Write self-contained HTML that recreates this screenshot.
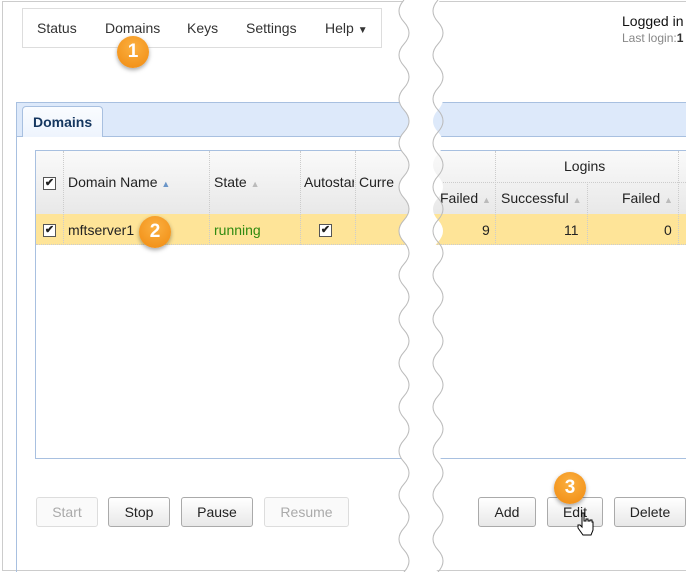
<!DOCTYPE html>
<html><head><meta charset="utf-8"><style>
*{box-sizing:border-box;margin:0;padding:0}
body{width:686px;height:572px;overflow:hidden;background:#fff;font-family:"Liberation Sans",Arial,sans-serif;font-size:14px;color:#222;position:relative}
.a{position:absolute}
.frame{left:2px;top:1px;width:700px;height:570px;border:1px solid #ccc}
.nav{left:22px;top:8px;width:360px;height:40px;border:1px solid #ddd}
.nav span{position:absolute;top:11px;color:#333}
.badge{width:32px;height:32px;border-radius:50%;background:radial-gradient(circle at 50% 35%,#fbb040,#f08a10);color:#fff;font-weight:bold;font-size:19px;text-align:center;line-height:32px;box-shadow:0 2px 4px rgba(0,0,0,.35)}
.band{left:16px;top:102px;width:680px;height:35px;background:#dde9fa;border:1px solid #a8c0e0}
.panelL{left:16px;top:136px;width:1px;height:436px;background:#a8c0e0}
.tab{left:22px;top:106px;width:81px;height:31px;background:linear-gradient(#fafcff,#eef4fd);border:1px solid #a8c0e0;border-bottom:none;border-radius:4px 4px 0 0;font-weight:bold;color:#15365f;font-size:14px;padding:7px 0 0 10px}
.tbl{left:35px;top:150px;width:660px;height:309px;border:1px solid #a8c0e0;background:#fff}
.hdr{left:36px;top:151px;width:660px;height:63px;background:linear-gradient(#fafafa,#e8e8e8)}
.row{left:36px;top:214px;width:660px;height:31px;background:#fee498;border-bottom:1px dotted #ccc}
.vl{position:absolute;width:0;border-left:1px dotted #ccc}
.cb{width:13px;height:13px;border:1px solid #555;background:#fff;font-size:11px;line-height:11px;text-align:center;font-weight:bold}
.btn{top:497px;height:30px;border:1px solid #aaa;border-radius:3px;background:linear-gradient(#fff,#e8e8e8);text-align:center;line-height:28px;color:#222}
.dis{border-color:#ddd;color:#aaa;background:#fafafa}
.sort{color:#bbb;font-size:9px}
</style></head><body>
<div class="a frame"></div>
<div class="a nav">
<span style="left:14px">Status</span><span style="left:82px">Domains</span><span style="left:164px">Keys</span><span style="left:223px">Settings</span><span style="left:302px">Help <span style="position:static;font-size:10px">&#9660;</span></span>
</div>
<div class="a" style="left:622px;top:13px;font-size:14px;color:#111">Logged in</div>
<div class="a" style="left:622px;top:31px;font-size:12px;color:#888">Last login:<b style="color:#333">1</b></div>

<div class="a band"></div>
<div class="a panelL"></div>
<div class="a tab">Domains</div>

<div class="a tbl"></div>
<div class="a hdr"></div>
<div class="a row"></div>
<div class="a" style="left:436px;top:182px;width:260px;border-top:1px dotted #ccc"></div>
<div class="vl" style="left:63px;top:151px;height:94px"></div>
<div class="vl" style="left:209px;top:151px;height:94px"></div>
<div class="vl" style="left:300px;top:151px;height:94px"></div>
<div class="vl" style="left:355px;top:151px;height:94px"></div>
<div class="vl" style="left:495px;top:151px;height:94px"></div>
<div class="vl" style="left:587px;top:182px;height:63px"></div>
<div class="vl" style="left:678px;top:151px;height:94px"></div>

<div class="a cb" style="left:43px;top:177px">&#10004;</div>
<div class="a" style="left:68px;top:174px">Domain Name <span style="color:#6a95c8;font-size:9px">&#9650;</span></div>
<div class="a" style="left:214px;top:174px">State <span class="sort">&#9650;</span></div>
<div class="a" style="left:304px;top:174px;width:50px;overflow:hidden;white-space:nowrap">Autostart</div>
<div class="a" style="left:359px;top:174px">Curre</div>
<div class="a" style="left:564px;top:158px">Logins</div>
<div class="a" style="left:440px;top:190px">Failed <span class="sort">&#9650;</span></div>
<div class="a" style="left:501px;top:190px">Successful <span class="sort">&#9650;</span></div>
<div class="a" style="left:622px;top:190px">Failed <span class="sort">&#9650;</span></div>

<div class="a cb" style="left:43px;top:224px">&#10004;</div>
<div class="a" style="left:68px;top:222px">mftserver1</div>
<div class="a" style="left:214px;top:222px;color:#2f8a10">running</div>
<div class="a cb" style="left:319px;top:224px">&#10004;</div>
<div class="a" style="left:482px;top:222px">9</div>
<div class="a" style="left:564px;top:222px">11</div>
<div class="a" style="left:664px;top:222px">0</div>

<div class="a btn dis" style="left:36px;width:62px">Start</div>
<div class="a btn" style="left:108px;width:62px">Stop</div>
<div class="a btn" style="left:181px;width:72px">Pause</div>
<div class="a btn dis" style="left:264px;width:85px">Resume</div>
<div class="a btn" style="left:478px;width:58px">Add</div>
<div class="a btn" style="left:547px;width:56px">Edit</div>
<svg class="a" style="left:577px;top:512px" width="18" height="24"><path d="M5 1 h2 v8 h2 v-2 h2 v2 h2 v-1 h2 v2 h1 v8 l-2 5 h-8 l-5-7 v-3 h2 l2 2 z" fill="#fff" stroke="#000" stroke-width="1"/></svg>
<div class="a btn" style="left:614px;width:72px">Delete</div>

<svg class="a" style="left:0;top:0" width="686" height="572">
<path d="M404 0 Q394 11 404 22 T404 44 T404 66 T404 88 T404 110 T404 132 T404 154 T404 176 T404 198 T404 220 T404 242 T404 264 T404 286 T404 308 T404 330 T404 352 T404 374 T404 396 T404 418 T404 440 T404 462 T404 484 T404 506 T404 528 T404 550 T404 572 L438 572 Q428 561 438 550 T438 528 T438 506 T438 484 T438 462 T438 440 T438 418 T438 396 T438 374 T438 352 T438 330 T438 308 T438 286 T438 264 T438 242 T438 220 T438 198 T438 176 T438 154 T438 132 T438 110 T438 88 T438 66 T438 44 T438 22 T438 0 Z" fill="#fff"/>
<path d="M404 0 Q394 11 404 22 T404 44 T404 66 T404 88 T404 110 T404 132 T404 154 T404 176 T404 198 T404 220 T404 242 T404 264 T404 286 T404 308 T404 330 T404 352 T404 374 T404 396 T404 418 T404 440 T404 462 T404 484 T404 506 T404 528 T404 550 T404 572" fill="none" stroke="#bbb"/>
<path d="M438 0 Q428 11 438 22 T438 44 T438 66 T438 88 T438 110 T438 132 T438 154 T438 176 T438 198 T438 220 T438 242 T438 264 T438 286 T438 308 T438 330 T438 352 T438 374 T438 396 T438 418 T438 440 T438 462 T438 484 T438 506 T438 528 T438 550 T438 572" fill="none" stroke="#bbb"/>
</svg>

<div class="a badge" style="left:117px;top:36px">1</div>
<div class="a badge" style="left:139px;top:216px">2</div>
<div class="a badge" style="left:554px;top:472px">3</div>
</body></html>
